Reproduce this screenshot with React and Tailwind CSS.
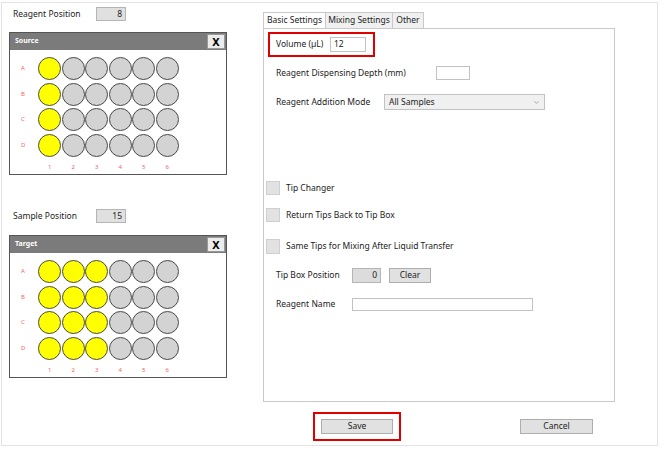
import { ChevronDown } from "lucide-react";

const font = { fontFamily: '"Noto Sans", "Open Sans", sans-serif' };

function Well({ filled }) {
  return (
    <div
      className={`h-[23px] w-[23px] rounded-full border border-[#4a4a4a] ${
        filled ? "bg-[#ffff00]" : "bg-[#d3d3d3]"
      }`}
    />
  );
}

function Plate({ title, filledCols }) {
  const rows = ["A", "B", "C", "D"];
  const cols = [1, 2, 3, 4, 5, 6];
  return (
    <div className="h-[143px] w-[218px] border border-[#555] bg-white">
      <div className="flex h-[17px] items-center justify-between bg-[#7b7b7b] pl-[5px] pr-[1px]">
        <span className="text-[7px] font-bold text-white">{title}</span>
        <div className="flex h-[15px] w-[18px] items-center justify-center border border-[#9a9a9a] bg-[#ececec] text-[11px] font-bold leading-none text-black">
          X
        </div>
      </div>
      <div className="flex flex-col gap-y-[2.5px] pt-[7px]">
        {rows.map((r) => (
          <div key={r} className="flex items-center">
            <span className="w-[28px] pl-[11px] text-[6px] text-[#f46464]">{r}</span>
            <div className="flex gap-[0.5px]">
              {cols.map((c) => (
                <Well key={c} filled={c <= filledCols} />
              ))}
            </div>
          </div>
        ))}
      </div>
      <div className="mt-[6px] flex pl-[28px]">
        {cols.map((c) => (
          <span key={c} className="w-[23.5px] text-center text-[6px] text-[#f46464]">
            {c}
          </span>
        ))}
      </div>
    </div>
  );
}

function PositionField({ label, value }) {
  return (
    <div className="flex items-center pl-[4px]">
      <span className="w-[83px] text-[8.5px] text-[#222]">{label}</span>
      <div className="flex h-[14px] w-[30px] items-center justify-end border border-[#b5b5b5] bg-[#e0e0e0] pr-[3px] text-[8.5px] text-[#222]">
        {value}
      </div>
    </div>
  );
}

function Check({ label, size = "h-[14px] w-[14px]" }) {
  return (
    <div className="ml-[2px] flex items-center">
      <div className={`${size} border border-[#cfcfcf] bg-[#e2e2e2]`} />
      <span className="ml-[6px] text-[8.5px] text-[#222]">{label}</span>
    </div>
  );
}

export default function App() {
  return (
    <div className="h-[449px] w-[660px] bg-white pl-[1px] pt-[2px]" style={font}>
      <div className="h-[444px] w-[657px] border border-[#e3e3e3]">
        <div className="flex pl-[7px]">
          <div className="flex w-[218px] flex-col">
            <div className="mt-[4px]">
              <PositionField label="Reagent Position" value="8" />
            </div>
            <div className="mt-[11px]">
              <Plate title="Source" filledCols={1} />
            </div>
            <div className="mt-[34px]">
              <PositionField label="Sample Position" value="15" />
            </div>
            <div className="mt-[12px]">
              <Plate title="Target" filledCols={3} />
            </div>
          </div>

          <div className="ml-[36px] mt-[9px] flex w-[352px] flex-col">
            <div className="flex h-[16px] items-end text-[8.5px] text-[#222]">
              <div className="flex h-[16px] w-[63px] items-center justify-center border border-b-0 border-[#c9c9c9] bg-white">
                Basic Settings
              </div>
              <div className="flex h-[16px] w-[67px] items-center justify-center border border-b-0 border-l-0 border-[#c9c9c9] bg-[#f0f0f0]">
                Mixing Settings
              </div>
              <div className="flex h-[16px] w-[31px] items-center justify-center border border-b-0 border-l-0 border-[#c9c9c9] bg-[#f0f0f0]">
                Other
              </div>
            </div>
            <div className="flex h-[374px] flex-col border border-[#c9c9c9] text-[8.5px] text-[#222]">
              <div className="ml-[4px] mt-[3px] flex h-[25px] w-[107px] items-center border-2 border-[#e00000] pl-[6px]">
                <span className="w-[54px]">Volume (µL)</span>
                <div className="flex h-[15px] w-[36px] items-center border border-[#c2c2c2] bg-white pl-[3px]">
                  12
                </div>
              </div>

              <div className="mt-[9px] flex h-[14px] items-center pl-[12px]">
                <span className="w-[160px]">Reagent Dispensing Depth (mm)</span>
                <div className="h-[14px] w-[34px] border border-[#c2c2c2] bg-white" />
              </div>

              <div className="mt-[14px] flex h-[16px] items-center pl-[12px]">
                <span className="w-[108px]">Reagent Addition Mode</span>
                <div className="flex h-[16px] w-[161px] items-center justify-between border border-[#c2c2c2] bg-[#f0f0f0] pl-[4px] pr-[4px]">
                  <span>All Samples</span>
                  <ChevronDown size={7} strokeWidth={2} className="text-[#777]" />
                </div>
              </div>

              <div className="mt-[71px]">
                <Check label="Tip Changer" />
              </div>
              <div className="mt-[13px]">
                <Check label="Return Tips Back to Tip Box" />
              </div>
              <div className="mt-[17px]">
                <Check label="Same Tips for Mixing After Liquid Transfer" size="h-[15px] w-[14px]" />
              </div>

              <div className="mt-[14px] flex h-[15px] items-center pl-[12px]">
                <span className="w-[76px]">Tip Box Position</span>
                <div className="flex h-[15px] w-[29px] items-center justify-end border border-[#b5b5b5] bg-[#dcdcdc] pr-[3px]">
                  0
                </div>
                <div className="ml-[8px] flex h-[15px] w-[42px] items-center justify-center border border-[#adadad] bg-[#e1e1e1]">
                  Clear
                </div>
              </div>

              <div className="mt-[15px] flex h-[13px] items-center pl-[12px]">
                <span className="w-[76px]">Reagent Name</span>
                <div className="h-[13px] w-[181px] border border-[#c2c2c2] bg-white" />
              </div>
            </div>
          </div>
        </div>

        <div className="mt-[10px] flex items-center text-[8.5px] text-[#222]">
          <div className="ml-[311px] flex h-[29px] w-[88px] items-center justify-center border-2 border-[#e00000]">
            <div className="flex h-[15px] w-[72px] items-center justify-center border border-[#adadad] bg-[#e1e1e1]">
              Save
            </div>
          </div>
          <div className="ml-[119px] flex h-[15px] w-[73px] items-center justify-center border border-[#adadad] bg-[#e1e1e1]">
            Cancel
          </div>
        </div>
      </div>
    </div>
  );
}
